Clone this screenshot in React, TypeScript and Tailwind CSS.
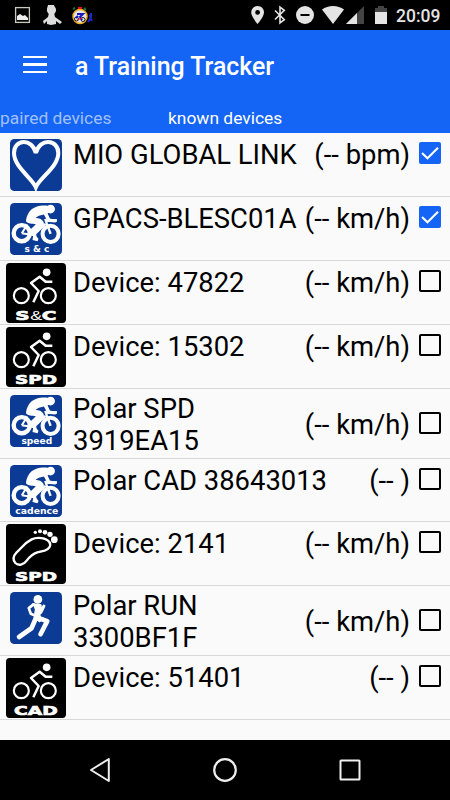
import { Fragment } from "react";
import clsx from "clsx";

type IconKind = "heart" | "bikeBlue" | "bikeBlack" | "foot" | "run";

type Device = {
  name: string[];
  value: string;
  icon: IconKind;
  label?: string;
  checked?: boolean;
  height: string;
};

const DEVICES: Device[] = [
  { name: ["MIO GLOBAL LINK"], value: "(-- bpm)", icon: "heart", checked: true, height: "h-16" },
  { name: ["GPACS-BLESC01A"], value: "(-- km/h)", icon: "bikeBlue", label: "s & c", checked: true, height: "h-16" },
  { name: ["Device: 47822"], value: "(-- km/h)", icon: "bikeBlack", label: "S&C", height: "h-16" },
  { name: ["Device: 15302"], value: "(-- km/h)", icon: "bikeBlack", label: "SPD", height: "h-16" },
  { name: ["Polar SPD", "3919EA15"], value: "(-- km/h)", icon: "bikeBlue", label: "speed", height: "h-[70px]" },
  { name: ["Polar CAD 38643013"], value: "(-- )", icon: "bikeBlue", label: "cadence", height: "h-[63px]" },
  { name: ["Device: 2141"], value: "(-- km/h)", icon: "foot", label: "SPD", height: "h-16" },
  { name: ["Polar RUN", "3300BF1F"], value: "(-- km/h)", icon: "run", height: "h-[70px]" },
  { name: ["Device: 51401"], value: "(-- )", icon: "bikeBlack", label: "CAD", height: "h-16" },
];

const BLUE_LABEL_WIDTH: Record<string, number> = { "s & c": 74, speed: 92, cadence: 128 };

function HeartIcon() {
  return (
    <svg viewBox="0 0 155 155" className="h-[52px] w-[52px]">
      <rect width="155" height="155" rx="13" fill="#0b3b95" />
      <path
        d="M77 144C66 116 12 84 12 42C12 0 66-4 77 42C88-4 144 0 144 42C144 84 88 116 77 144Z"
        fill="none"
        stroke="#fff"
        strokeWidth="12"
        strokeLinejoin="miter"
      />
    </svg>
  );
}

function BlueBikeIcon({ label }: { label: string }) {
  return (
    <svg viewBox="0 0 155 155" className="h-[52px] w-[52px]">
      <rect width="155" height="155" rx="13" fill="#0b3b95" />
      <g fill="none" stroke="#fff">
        <circle cx="35" cy="90" r="24" strokeWidth="13" />
        <circle cx="121" cy="92" r="24" strokeWidth="12" />
        <path d="M35 90L52 64M35 90L71 96L106 62" strokeWidth="6" />
        <path d="M105 47L110 62L121 92" strokeWidth="7" />
        <path d="M112 52H140" strokeWidth="8" />
      </g>
      <path
        d="M112 8C91 6 68 11 57 27C51 37 47 48 48 55C53 61 67 62 77 63L61 79L60 88L69 99L67 110L82 114L85 107L79 99L77 89L98 69C106 60 98 52 90 47L76 44L86 38L101 34L107 45L110 56L136 58L138 51L119 46L112 31L119 27Z"
        fill="#fff"
      />
      <circle cx="121" cy="18" r="13" fill="#fff" />
      <text
        x="80"
        y="146"
        textAnchor="middle"
        textLength={BLUE_LABEL_WIDTH[label]}
        lengthAdjust="spacingAndGlyphs"
        fill="#fff"
        className="font-['DejaVu_Sans'] text-[28px] font-bold"
      >
        {label}
      </text>
    </svg>
  );
}

function RunIcon() {
  return (
    <svg viewBox="0 0 155 155" className="h-[52px] w-[52px]">
      <rect width="155" height="155" rx="13" fill="#0b3b95" />
      <circle cx="83" cy="22" r="13" fill="#fff" />
      <path d="M67 33L94 37L91 73L105 78L88 91L70 76L74 52Z" fill="#fff" />
      <g fill="none" stroke="#fff" strokeLinecap="round" strokeLinejoin="round">
        <path d="M70 37L56 48L62 65L69 68" strokeWidth="8" />
        <path d="M89 40L92 61L101 42" strokeWidth="9" />
        <path d="M78 76L64 108L27 134" strokeWidth="14" />
        <path d="M84 77L111 87L91 126" strokeWidth="14" />
      </g>
    </svg>
  );
}

function BlackLabel({ label }: { label: string }) {
  const style = "font-['DejaVu_Sans'] text-[38px] font-bold";
  if (label === "S&C") {
    return (
      <g fill="#fff" stroke="#fff">
        <text x="28" y="171" textLength="43" lengthAdjust="spacingAndGlyphs" strokeWidth="2" className={style}>
          S
        </text>
        <text
          x="73"
          y="171"
          textLength="36"
          lengthAdjust="spacingAndGlyphs"
          strokeWidth="0"
          className="font-['Liberation_Sans'] text-[38px]"
        >
          &amp;
        </text>
        <text x="107" y="171" textLength="44" lengthAdjust="spacingAndGlyphs" strokeWidth="2" className={style}>
          C
        </text>
      </g>
    );
  }
  return (
    <text
      x={label === "CAD" ? 24 : 27}
      y="171"
      textLength={label === "CAD" ? 131 : 126}
      lengthAdjust="spacingAndGlyphs"
      fill="#fff"
      stroke="#fff"
      strokeWidth="2"
      className={style}
    >
      {label}
    </text>
  );
}

function BlackBikeIcon({ label }: { label: string }) {
  return (
    <svg viewBox="0 0 180 180" className="h-[60px] w-[60px]">
      <rect width="180" height="180" rx="11" fill="#000" />
      <g fill="none" stroke="#fff" strokeWidth="6.5">
        <circle cx="46" cy="98" r="22.5" />
        <circle cx="127" cy="98" r="22.5" />
        <path d="M139 56H119L101 41L75 60L98 84L82 118" strokeWidth="7.5" strokeLinejoin="round" />
      </g>
      <circle cx="122" cy="28" r="11.5" fill="#fff" />
      <BlackLabel label={label} />
    </svg>
  );
}

function FootIcon({ label }: { label: string }) {
  return (
    <svg viewBox="0 0 180 180" className="h-[60px] w-[60px]">
      <rect width="180" height="180" rx="11" fill="#000" />
      <path
        d="M77 46C94 38 121 42 130 54C137 65 129 76 116 80L94 85C76 91 70 99 62 110C53 123 37 126 28 117C19 107 22 96 32 85C49 70 55 57 77 46Z"
        fill="none"
        stroke="#fff"
        strokeWidth="7"
      />
      <g fill="#fff">
        <circle cx="88" cy="25" r="5" />
        <circle cx="102" cy="22" r="6" />
        <circle cx="117" cy="25" r="7" />
        <circle cx="132" cy="31" r="8" />
        <circle cx="145" cy="47" r="10" />
      </g>
      <BlackLabel label={label} />
    </svg>
  );
}

function DeviceIcon({ icon, label = "" }: { icon: IconKind; label?: string }) {
  switch (icon) {
    case "heart":
      return <HeartIcon />;
    case "bikeBlue":
      return <BlueBikeIcon label={label} />;
    case "bikeBlack":
      return <BlackBikeIcon label={label} />;
    case "foot":
      return <FootIcon label={label} />;
    case "run":
      return <RunIcon />;
  }
}

function Checkbox({ checked }: { checked?: boolean }) {
  return (
    <span
      role="checkbox"
      aria-checked={!!checked}
      className={clsx(
        "mb-[5px] block h-[22px] w-[22px] rounded-[2px]",
        checked ? "bg-[#1464f6]" : "border-2 border-black",
      )}
    >
      {checked ? (
        <svg viewBox="0 0 22 22" className="h-full w-full">
          <path d="M3 11L8.5 16.3L19 5.8" fill="none" stroke="#fff" strokeWidth="2.1" />
        </svg>
      ) : null}
    </span>
  );
}

function DeviceRow({ device }: { device: Device }) {
  const twoLines = device.name.length > 1;
  return (
    <li
      className={clsx(
        "flex items-start border-b border-[#d8d8d8]",
        device.height,
        twoLines ? "pt-1" : "pt-1.5",
      )}
    >
      <div
        className={clsx(
          "mr-px flex h-[60px] w-[72px] shrink-0 items-center justify-center",
          twoLines ? "-mt-0.5" : "-mt-1",
        )}
      >
        <DeviceIcon icon={device.icon} label={device.label} />
      </div>
      <div className="flex flex-1 items-center pr-[9px]">
        <p className="flex-1 whitespace-nowrap">
          {device.name.map((line, i) => (
            <Fragment key={line}>
              {i > 0 ? <br /> : null}
              {line}
            </Fragment>
          ))}
        </p>
        <p className="mr-[9px] whitespace-nowrap">{device.value}</p>
        <Checkbox checked={device.checked} />
      </div>
    </li>
  );
}

function StatusBar() {
  return (
    <div className="flex h-[30px] items-center justify-between bg-black">
      <svg viewBox="0 0 110 30" className="h-[30px] w-[110px]">
        <rect x="15.6" y="7.6" width="13.8" height="14.8" fill="none" stroke="#c9c9bf" strokeWidth="1.3" />
        <path d="M17 20V16L20 14L23 16L25 15L28 18V20Z" fill="#eee" />
        <circle cx="51.5" cy="10" r="4.6" fill="#ddd" />
        <path d="M48 5L54 5L55 9H47ZM49 13H54L55 17L62 22L60 24L56 21V24L51 25L47 24V21L44 24L43 21L48 17Z" fill="#ddd" />
        <circle cx="80" cy="16.5" r="7" fill="#e4e4ee" stroke="#edae1c" strokeWidth="1.5" />
        <path d="M78 7H82V9H78Z" fill="#e11" />
        <path d="M73 9L75 8M84 8L86 10" stroke="#187a32" strokeWidth="2" />
        <circle cx="76.5" cy="19" r="2" fill="none" stroke="#151515" />
        <circle cx="83" cy="19.5" r="2" fill="none" stroke="#151515" />
        <path d="M77 14H83L80 17L82 20M78 16L76 18" fill="none" stroke="#1719ba" strokeWidth="2" />
        <path d="M77 20L82 18" stroke="#e11" />
        <path d="M91 13V17L88 22M89 16L92 15M90 18L92 21" fill="none" stroke="#2228cc" strokeWidth="2" />
      </svg>
      <div className="flex items-center">
        <svg viewBox="250 0 140 30" className="h-[30px] w-[140px]">
          <path
            d="M257.6 6C254 6 251.2 8.8 251.2 12.3C251.2 16.7 257.6 24 257.6 24S264 16.7 264 12.3C264 8.8 261.2 6 257.6 6ZM257.6 14.8A2.4 2.4 0 1 1 257.6 10A2.4 2.4 0 0 1 257.6 14.8Z"
            fill="#e4e4e4"
          />
          <path d="M275 10.5L284.3 19.7L280 23V7L284.3 10.3L275 19.5" fill="none" stroke="#e4e4e4" strokeWidth="1.6" />
          <circle cx="305" cy="15" r="9" fill="#e4e4e4" />
          <path d="M300.5 15H309.5" stroke="#000" strokeWidth="2" />
          <path d="M322 9.6C328 4.8 338 4.8 344 9.6L333 24Z" fill="#e4e4e4" />
          <path d="M364 6V24H346Z" fill="#444" />
          <path d="M357 13V24H346Z" fill="#e4e4e4" />
          <path d="M375 8H378V6H384V8H387V12H375Z" fill="#444" />
          <path d="M375 12H387V24H375Z" fill="#e4e4e4" />
        </svg>
        <span className="w-[60px] pt-px pl-[6px] text-[17.5px] leading-[30px] font-medium text-[#e4e4e4]">20:09</span>
      </div>
    </div>
  );
}

function AppBar() {
  return (
    <header className="h-[103px] bg-[#1464f6] text-white">
      <div className="flex h-[72px] items-center">
        <button type="button" aria-label="Menu" className="-mt-[3px] ml-[23px] flex w-6 flex-col gap-[5px]">
          <span className="h-[2.5px] bg-white" />
          <span className="h-[2.5px] bg-white" />
          <span className="h-[2.5px] bg-white" />
        </button>
        <h1 className="mt-px ml-[28px] text-[24.9px] leading-8 font-medium">a Training Tracker</h1>
      </div>
      <nav className="flex h-[31px] pt-px text-[17.4px] leading-[31px]">
        <span className="w-[168px] text-[#a1c1fb]">paired devices</span>
        <span>known devices</span>
      </nav>
    </header>
  );
}

function NavigationBar() {
  return (
    <footer className="flex h-[60px] items-center justify-between bg-black px-[87px]">
      <svg viewBox="0 0 26 26" className="h-[26px] w-[26px]">
        <path d="M21.8 2V24L4 13Z" fill="none" stroke="#eee" strokeWidth="2" strokeLinejoin="round" />
      </svg>
      <svg viewBox="0 0 26 26" className="h-[26px] w-[26px]">
        <circle cx="13" cy="13" r="10.8" fill="none" stroke="#eee" strokeWidth="2.2" />
      </svg>
      <svg viewBox="0 0 26 26" className="h-[26px] w-[26px]">
        <rect x="3.5" y="3.5" width="19" height="19" rx="0.5" fill="none" stroke="#eee" strokeWidth="2" />
      </svg>
    </footer>
  );
}

export default function App() {
  return (
    <div className="flex h-[800px] w-[450px] flex-col overflow-hidden bg-[#fafafa] font-['Roboto',sans-serif] text-black">
      <StatusBar />
      <AppBar />
      <ul className="flex-1 text-[27.4px] leading-8">
        {DEVICES.map((device) => (
          <DeviceRow key={device.name.join(" ")} device={device} />
        ))}
      </ul>
      <NavigationBar />
    </div>
  );
}
